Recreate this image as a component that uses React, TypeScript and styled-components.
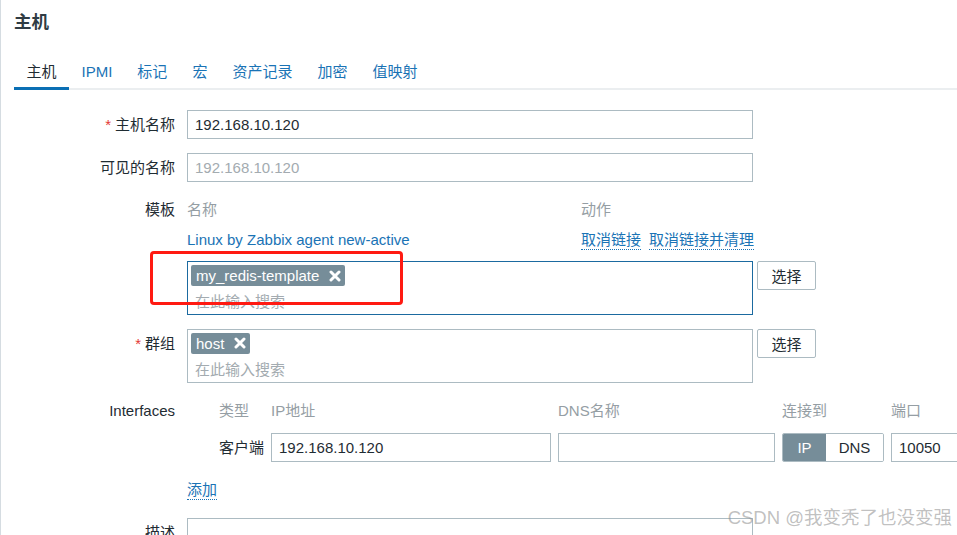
import React from 'react';
import styled, { createGlobalStyle } from 'styled-components';

const GlobalStyle = createGlobalStyle`
  html, body {
    margin: 0;
    padding: 0;
    background: #ffffff;
    overflow: hidden;
  }
  body {
    font-family: 'Liberation Sans', 'Noto Sans CJK SC', sans-serif;
    font-size: 15px;
    color: #1f2c33;
  }
  * {
    box-sizing: border-box;
  }
`;

const Page = styled.div`
  position: relative;
  width: 957px;
  height: 535px;
  padding: 10px 0 0 13px;
  border-left: 1px solid #d5dce1;
  overflow: hidden;
`;

const Title = styled.h1`
  margin: 0;
  font-size: 17.5px;
  line-height: 24px;
  font-weight: bold;
  color: #2f3c44;
`;

const TabList = styled.ul`
  display: flex;
  margin: 20px 0 0;
  padding: 0;
  list-style: none;
  border-bottom: 2px solid #ebeef0;
  height: 36px;
`;

const Tab = styled.li<{ $active?: boolean }>`
  padding: 0 12.5px;
  line-height: 34px;
  color: ${(p) => (p.$active ? '#1f2c33' : '#1a73b5')};
  border-bottom: 3px solid ${(p) => (p.$active ? '#0a6fb4' : 'transparent')};
  margin-bottom: -2px;
  padding-top: 1px;
`;

const Form = styled.div`
  display: grid;
  grid-template-columns: 161px 566px;
  column-gap: 12px;
  row-gap: 13.5px;
  padding-top: 20px;
  align-items: start;
`;

const Label = styled.div<{ $required?: boolean }>`
  text-align: right;
  line-height: 29px;
  white-space: nowrap;
  &::before {
    content: ${(p) => (p.$required ? "'*'" : "''")};
    color: #e33734;
    margin-right: 4px;
  }
`;

const TextInput = styled.div<{ $placeholder?: boolean }>`
  width: 566px;
  height: 29px;
  border: 1px solid #acbbc2;
  background: #ffffff;
  padding: 0 7px;
  line-height: 27px;
  color: ${(p) => (p.$placeholder ? '#a3abb0' : '#1f2c33')};
  white-space: nowrap;
`;

const TemplateTable = styled.div`
  display: grid;
  grid-template-columns: 394px 172px;
  grid-auto-rows: 29px;
  line-height: 30px;
`;

const HeaderCell = styled.div`
  color: #959ea4;
  white-space: nowrap;
`;

const PlainLink = styled.span`
  color: #1a73b5;
  white-space: nowrap;
  padding-top: 1px;
`;

const Actions = styled.div`
  display: flex;
  gap: 8px;
  align-items: center;
  height: 29px;
  padding-top: 3px;
`;

const DottedLink = styled.span`
  display: inline-block;
  color: #1a73b5;
  line-height: 18px;
  border-bottom: 1px dotted #1a73b5;
  white-space: nowrap;
`;

const MultiRow = styled.div<{ $spaced?: boolean }>`
  display: flex;
  align-items: flex-start;
  gap: 4px;
  margin-top: ${(p) => (p.$spaced ? '8px' : '0')};
`;

const MultiBox = styled.div<{ $focused?: boolean }>`
  position: relative;
  flex: 0 0 566px;
  height: 54px;
  border: 1px solid ${(p) => (p.$focused ? '#1b6aa0' : '#acbbc2')};
  padding: 3px 3px 0;
`;

const Chip = styled.span`
  display: inline-flex;
  align-items: center;
  height: 21px;
  padding: 0 4px 0 5px;
  gap: 10px;
  background: #768d99;
  color: #ffffff;
  border-radius: 2px;
  line-height: 21px;
`;

const Placeholder = styled.div`
  color: #a3abb0;
  line-height: 22px;
  padding: 5px 4px 0;
`;

const Annotation = styled.div`
  position: absolute;
  left: -38px;
  top: -11px;
  width: 253px;
  height: 54px;
  border: 3px solid #ff1a12;
  border-radius: 4px;
  pointer-events: none;
`;

const SelectButton = styled.button`
  flex: 0 0 59px;
  height: 29px;
  border: 1px solid #acbbc2;
  border-radius: 2px;
  background: #ffffff;
  font: inherit;
  color: #1f2c33;
  padding: 0;
`;

const InterfaceGrid = styled.div`
  display: grid;
  grid-template-columns: 45px 280px 217px 102px 100px;
  column-gap: 7px;
  row-gap: 8px;
  padding-left: 32px;
  line-height: 29px;
  width: 800px;
`;

const RowLabel = styled.div`
  text-align: right;
  white-space: nowrap;
`;

const Cell = styled.div`
  height: 29px;
  border: 1px solid #acbbc2;
  padding: 0 7px;
  line-height: 27px;
  white-space: nowrap;
`;

const Toggle = styled.div`
  display: flex;
  height: 29px;
  border: 1px solid #acbbc2;
  border-radius: 2px;
  overflow: hidden;
`;

const ToggleItem = styled.div<{ $on?: boolean }>`
  flex: ${(p) => (p.$on ? '0 0 43px' : '1')};
  text-align: center;
  line-height: 27px;
  background: ${(p) => (p.$on ? '#768d99' : '#ffffff')};
  color: ${(p) => (p.$on ? '#ffffff' : '#1f2c33')};
`;

const AddRow = styled.div`
  height: 29px;
  display: flex;
  align-items: center;
`;

const TextArea = styled.div`
  width: 566px;
  height: 70px;
  border: 1px solid #acbbc2;
`;

const Watermark = styled.div`
  position: absolute;
  right: 5px;
  bottom: 6px;
  font-size: 18.5px;
  line-height: 22px;
  color: rgba(140, 140, 140, 0.55);
  white-space: nowrap;
`;

const RemoveIcon = () => (
  <svg width="12" height="12" viewBox="0 0 12 12">
    <path d="M2 2 L10 10 M10 2 L2 10" stroke="#ffffff" strokeWidth="3" strokeLinecap="round" />
  </svg>
);

const tabs = ['主机', 'IPMI', '标记', '宏', '资产记录', '加密', '值映射'];

const App = () => {
  return (
    <>
      <GlobalStyle />
      <Page>
        <Title>主机</Title>
        <TabList>
          {tabs.map((t, i) => (
            <Tab key={t} $active={i === 0}>
              {t}
            </Tab>
          ))}
        </TabList>

        <Form>
          <Label $required>主机名称</Label>
          <TextInput>192.168.10.120</TextInput>

          <Label>可见的名称</Label>
          <TextInput $placeholder>192.168.10.120</TextInput>

          <Label>模板</Label>
          <div>
            <TemplateTable>
              <HeaderCell>名称</HeaderCell>
              <HeaderCell>动作</HeaderCell>
              <PlainLink>Linux by Zabbix agent new-active</PlainLink>
              <Actions>
                <DottedLink>取消链接</DottedLink>
                <DottedLink>取消链接并清理</DottedLink>
              </Actions>
            </TemplateTable>
            <MultiRow $spaced>
              <MultiBox $focused>
                <Chip>
                  my_redis-template
                  <RemoveIcon />
                </Chip>
                <Placeholder>在此输入搜索</Placeholder>
                <Annotation />
              </MultiBox>
              <SelectButton>选择</SelectButton>
            </MultiRow>
          </div>

          <Label $required>群组</Label>
          <MultiRow>
            <MultiBox>
              <Chip>
                host
                <RemoveIcon />
              </Chip>
              <Placeholder>在此输入搜索</Placeholder>
            </MultiBox>
            <SelectButton>选择</SelectButton>
          </MultiRow>

          <Label>Interfaces</Label>
          <InterfaceGrid>
            <HeaderCell>类型</HeaderCell>
            <HeaderCell>IP地址</HeaderCell>
            <HeaderCell>DNS名称</HeaderCell>
            <HeaderCell>连接到</HeaderCell>
            <HeaderCell>端口</HeaderCell>
            <RowLabel>客户端</RowLabel>
            <Cell>192.168.10.120</Cell>
            <Cell />
            <Toggle>
              <ToggleItem $on>IP</ToggleItem>
              <ToggleItem>DNS</ToggleItem>
            </Toggle>
            <Cell>10050</Cell>
          </InterfaceGrid>

          <div />
          <AddRow>
            <DottedLink>添加</DottedLink>
          </AddRow>

          <Label>描述</Label>
          <TextArea />
        </Form>

        <Watermark>CSDN @我变秃了也没变强</Watermark>
      </Page>
    </>
  );
};

export default App;
